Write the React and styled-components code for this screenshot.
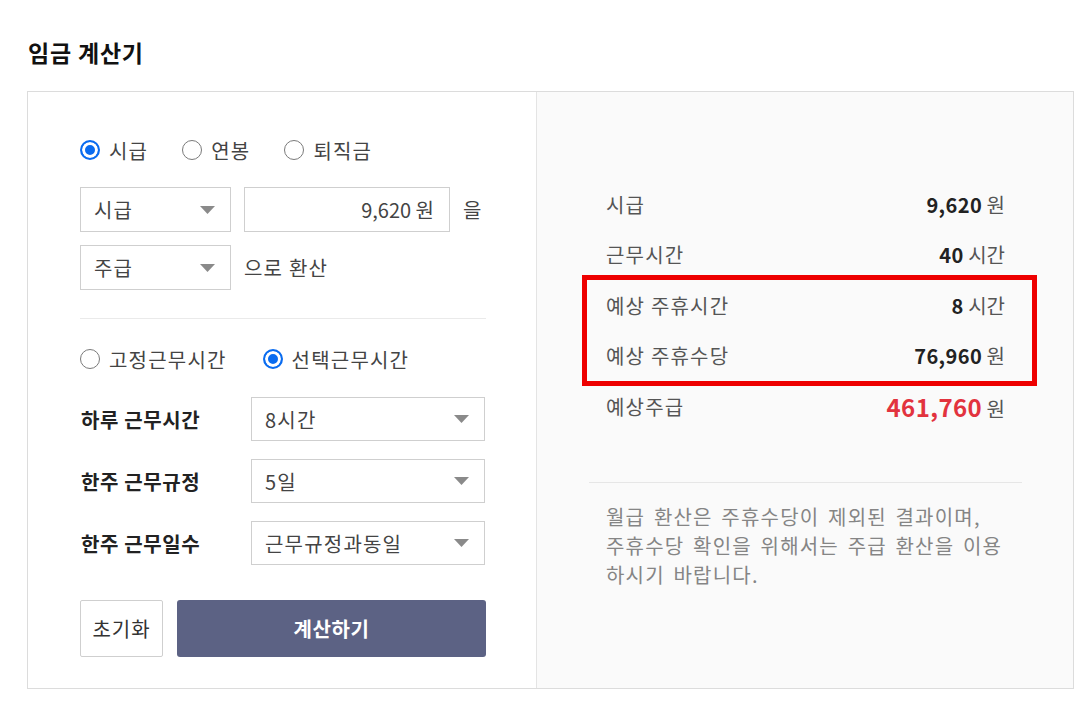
import styled, { createGlobalStyle } from 'styled-components'

const GlobalStyle = createGlobalStyle`
    body {
        margin: 0;
        background: #fff;
        font-family: "Noto Sans CJK KR", "Noto Sans", sans-serif;
        color: #333;
    }
`

const Caret = () => (
    <svg width="15" height="8" viewBox="0 0 15 8">
        <path d="M0 0 L15 0 L7.5 8 Z" fill="#8a8a8a" />
    </svg>
)

const Radio = ({ checked, label }) => (
    <RadioItem>
        <RadioDot $checked={checked} />
        {label}
    </RadioItem>
)

const Select = ({ value, wide }) => (
    <SelectBox $wide={wide}>
        <span>{value}</span>
        <Caret />
    </SelectBox>
)

const results = [
    { label: '시급', value: '9,620', unit: '원' },
    { label: '근무시간', value: '40', unit: '시간' },
]

const App = () => {
    return (
        <Page>
            <GlobalStyle />
            <Title>임금 계산기</Title>
            <Card>
                <FormPanel>
                    <RadioRow>
                        <Radio checked label="시급" />
                        <Radio label="연봉" />
                        <Radio label="퇴직금" />
                    </RadioRow>
                    <InputRow>
                        <Select value="시급" />
                        <AmountBox>9,620 원</AmountBox>
                        <Suffix>을</Suffix>
                    </InputRow>
                    <InputRow>
                        <Select value="주급" />
                        <Suffix>으로 환산</Suffix>
                    </InputRow>
                    <Divider />
                    <RadioRow className="work">
                        <Radio label="고정근무시간" />
                        <Radio checked label="선택근무시간" />
                    </RadioRow>
                    <FieldGrid>
                        <FieldLabel>하루 근무시간</FieldLabel>
                        <Select wide value="8시간" />
                        <FieldLabel>한주 근무규정</FieldLabel>
                        <Select wide value="5일" />
                        <FieldLabel>한주 근무일수</FieldLabel>
                        <Select wide value="근무규정과동일" />
                    </FieldGrid>
                    <ButtonRow>
                        <ResetButton>초기화</ResetButton>
                        <SubmitButton>계산하기</SubmitButton>
                    </ButtonRow>
                </FormPanel>
                <ResultPanel>
                    <ResultList>
                        {results.map(r => (
                            <ResultRow key={r.label}>
                                <span>{r.label}</span>
                                <Value><b>{r.value}</b> {r.unit}</Value>
                            </ResultRow>
                        ))}
                        <Highlight>
                            <ResultRow>
                                <span>예상 주휴시간</span>
                                <Value><b>8</b> 시간</Value>
                            </ResultRow>
                            <ResultRow>
                                <span>예상 주휴수당</span>
                                <Value><b>76,960</b> 원</Value>
                            </ResultRow>
                        </Highlight>
                        <ResultRow>
                            <span>예상주급</span>
                            <Value $total><b>461,760</b> 원</Value>
                        </ResultRow>
                    </ResultList>
                    <PanelDivider />
                    <Note>
                        월급 환산은 주휴수당이 제외된 결과이며,<br />
                        주휴수당 확인을 위해서는 주급 환산을 이용<br />
                        하시기 바랍니다.
                    </Note>
                </ResultPanel>
            </Card>
        </Page>
    )
}

export default App

const Page = styled.div`
    padding: 36px 17px 0 27px;
    width: 1047px;
`

const Title = styled.h1`
    margin: 0 0 0 1px;
    font-size: 23px;
    font-weight: 700;
    line-height: 32px;
    color: #111;
    letter-spacing: 0.8px;
`

const Card = styled.div`
    margin-top: 23px;
    display: flex;
    border: 1px solid #dcdcdc;
    height: 596px;
`

const FormPanel = styled.div`
    width: 456px;
    padding: 46px 0 0 52px;
    background: #fff;
`

const RadioRow = styled.div`
    display: flex;
    gap: 34px;
    height: 24px;
    align-items: center;

    &.work {
        margin-top: 28px;
        gap: 36px;
    }
`

const RadioItem = styled.label`
    display: flex;
    align-items: center;
    gap: 9px;
    font-size: 20px;
    letter-spacing: 1.2px;
    color: #444;
`

const RadioDot = styled.span`
    box-sizing: border-box;
    width: 20px;
    height: 20px;
    border-radius: 50%;
    border: ${p => (p.$checked ? '2px solid #0a6cf0' : '1.5px solid #7a7a7a')};
    background: ${p => (p.$checked ? '#0a6cf0' : '#fff')};
    box-shadow: ${p => (p.$checked ? 'inset 0 0 0 3px #fff' : 'none')};
`

const InputRow = styled.div`
    display: flex;
    align-items: center;
    gap: 13px;
    margin-top: 13px;

    ${RadioRow} + & {
        margin-top: 25px;
    }
`

const SelectBox = styled.div`
    box-sizing: border-box;
    display: flex;
    align-items: center;
    justify-content: space-between;
    width: ${p => (p.$wide ? '234px' : '151px')};
    height: ${p => (p.$wide ? '44px' : '45px')};
    padding: 0 15px 0 13px;
    border: 1px solid #cfcfcf;
    background: #fff;
    font-size: 20px;
    letter-spacing: 1.2px;
    color: #444;
`

const AmountBox = styled.div`
    box-sizing: border-box;
    width: 206px;
    height: 45px;
    padding: 0 15px;
    border: 1px solid #cfcfcf;
    display: flex;
    align-items: center;
    justify-content: flex-end;
    font-size: 20px;
    color: #444;
`

const Suffix = styled.span`
    font-size: 20px;
    letter-spacing: 1.2px;
    color: #444;
`

const Divider = styled.hr`
    margin: 28px 0 0;
    width: 406px;
    border: 0;
    border-top: 1px solid #eaeaea;
`

const FieldGrid = styled.div`
    display: grid;
    grid-template-columns: 171px 234px;
    row-gap: 18px;
    align-items: center;
    margin-top: 26px;
`

const FieldLabel = styled.span`
    font-size: 20px;
    font-weight: 700;
    color: #222;
    padding-left: 1px;
    letter-spacing: 0.6px;
`

const ButtonRow = styled.div`
    display: flex;
    gap: 14px;
    margin-top: 35px;
`

const ResetButton = styled.button`
    box-sizing: border-box;
    width: 83px;
    height: 57px;
    padding: 0;
    border: 1px solid #cfcfcf;
    border-radius: 2px;
    background: #fff;
    font-family: inherit;
    font-size: 20px;
    letter-spacing: 1px;
    color: #333;
`

const SubmitButton = styled.button`
    width: 309px;
    height: 57px;
    border: 0;
    border-radius: 3px;
    background: #5c6284;
    font-family: inherit;
    font-size: 20px;
    letter-spacing: 0.6px;
    font-weight: 700;
    color: #fff;
`

const ResultPanel = styled.div`
    flex: 1;
    border-left: 1px solid #e4e4e4;
    background: #fafafa;
    padding: 87px 51px 0 52px;
`

const ResultList = styled.div`
    padding: 0 17px;
`

const ResultRow = styled.div`
    display: flex;
    justify-content: space-between;
    align-items: center;
    height: 50.5px;
    font-size: 20px;
    letter-spacing: 1.2px;
    color: #555;
`

const Value = styled.span`
    color: #555;
    letter-spacing: 0;
    b {
        font-size: ${p => (p.$total ? '24px' : '20px')};
        color: ${p => (p.$total ? '#e2333e' : '#222')};
        font-weight: 700;
        letter-spacing: 0.4px;
    }
`

const Highlight = styled.div`
    position: relative;

    &::after {
        content: '';
        position: absolute;
        top: -5px;
        bottom: -5px;
        left: -24px;
        right: -32px;
        border: 5px solid #ee0000;
        pointer-events: none;
    }
`

const PanelDivider = styled.hr`
    margin: 50px 0 0;
    border: 0;
    border-top: 1px solid #e6e6e6;
`

const Note = styled.p`
    margin: 19px 0 0;
    padding-left: 17px;
    font-size: 20px;
    line-height: 29px;
    letter-spacing: 1.2px;
    word-spacing: 3px;
    color: #858585;
`
